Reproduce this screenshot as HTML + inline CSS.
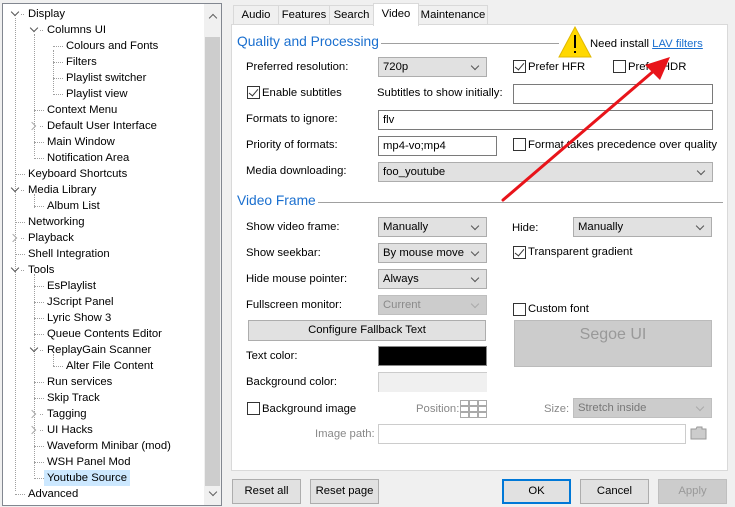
<!DOCTYPE html>
<html><head><meta charset="utf-8"><style>
*{box-sizing:border-box;margin:0;padding:0}
body{width:735px;height:507px;background:#f0f0f0;font-family:"Liberation Sans",sans-serif;font-size:11.3px;color:#000;position:relative;overflow:hidden}
.a{position:absolute;white-space:nowrap}
.tree{position:absolute;left:2px;top:3px;width:220px;height:503px;background:#fff;border:1px solid #828790}
.ti{position:absolute;height:16px;line-height:16px;font-size:11.3px}
.sel{background:#cce8ff;padding:0 3px;margin-left:-3px}
.cb{position:absolute;width:13px;height:13px;border:1px solid #333;background:#fff}
.cb.on::after{content:"";position:absolute;left:3px;top:0px;width:4px;height:8px;border:solid #333;border-width:0 1.5px 1.5px 0;transform:rotate(40deg)}
.combo{position:absolute;height:20px;background:#e1e1e1;border:1px solid #adadad;line-height:18px;padding-left:4px}
.combo::after{content:"";position:absolute;right:8px;top:5px;width:5px;height:5px;border:solid #555;border-width:0 1px 1px 0;transform:rotate(45deg)}
.combo.dis{background:#ccc;border-color:#bfbfbf;color:#8a8a8a}
.combo.dis::after{border-color:#aaa}
.tb{position:absolute;height:20px;background:#fff;border:1px solid #7a7a7a;line-height:18px;padding-left:4px}
.btn{position:absolute;height:25px;background:#e1e1e1;border:1px solid #adadad;text-align:center;line-height:23px}
.lbl{position:absolute;line-height:16px;white-space:nowrap}
.h{position:absolute;color:#1a6fcf;font-size:13.8px;white-space:nowrap}
.line{position:absolute;height:1px;background:#a0a0a0}
.dot{position:absolute;border-left:1px dotted #a0a0a0}
.doth{position:absolute;border-top:1px dotted #a0a0a0;height:0}
.chev{position:absolute;width:6px;height:6px;border:solid #555;border-width:0 1.5px 1.5px 0}
</style></head><body>

<div class="tree">
 <div class="a" style="left:201px;top:0;width:17px;height:501px;background:#f0f0f0"></div>
 <div class="a" style="left:202px;top:33px;width:15px;height:449px;background:#cdcdcd"></div>
 <div class="chev" style="left:207px;top:11px;transform:rotate(-135deg);border-color:#606060"></div>
 <div class="chev" style="left:207px;top:485px;transform:rotate(45deg);border-color:#606060"></div>
</div>
<div class="dot" style="left:15px;top:18px;height:473px"></div>
<div class="dot" style="left:34px;top:34px;height:122px"></div>
<div class="dot" style="left:53px;top:50px;height:42px"></div>
<div class="dot" style="left:34px;top:194px;height:14px"></div>
<div class="dot" style="left:34px;top:274px;height:202px"></div>
<div class="dot" style="left:53px;top:354px;height:12px"></div>
<div id="tr"></div>
<script>
var items=[["Display",0,"e"],["Columns UI",1,"e"],["Colours and Fonts",2],["Filters",2],["Playlist switcher",2],["Playlist view",2],["Context Menu",1],["Default User Interface",1,"c"],["Main Window",1],["Notification Area",1],["Keyboard Shortcuts",0],["Media Library",0,"e"],["Album List",1],["Networking",0],["Playback",0,"c"],["Shell Integration",0],["Tools",0,"e"],["EsPlaylist",1],["JScript Panel",1],["Lyric Show 3",1],["Queue Contents Editor",1],["ReplayGain Scanner",1,"e"],["Alter File Content",2],["Run services",1],["Skip Track",1],["Tagging",1,"c"],["UI Hacks",1,"c"],["Waveform Minibar (mod)",1],["WSH Panel Mod",1],["Youtube Source",1,"s"],["Advanced",0]];
var h="";
items.forEach(function(it,i){var y=6+i*16;var x=28+it[1]*19;var cx=x-13;
if(it[2]=="e"){h+='<div class="chev" style="left:'+(cx-3)+'px;top:'+(y+3)+'px;transform:rotate(45deg)"></div><div class="doth" style="left:'+(cx+6)+'px;top:'+(y+8)+'px;width:3px"></div>';}
else if(it[2]=="c"){h+='<div class="chev" style="left:'+(cx-5)+'px;top:'+(y+5)+'px;transform:rotate(-45deg);border-color:#aaa"></div><div class="doth" style="left:'+(cx+6)+'px;top:'+(y+8)+'px;width:3px"></div>';}
else{h+='<div class="doth" style="left:'+(cx)+'px;top:'+(y+8)+'px;width:10px"></div>';}
h+='<div class="ti'+(it[2]=="s"?" sel":"")+'" style="left:'+x+'px;top:'+y+'px">'+it[0]+'</div>';});
document.getElementById("tr").innerHTML=h;
</script>

<div class="a" style="left:231px;top:24px;width:497px;height:447px;background:#fff;border:1px solid #d9d9d9"></div>
<div class="a" style="left:233px;top:5px;width:46px;height:20px;background:#f0f0f0;border:1px solid #d9d9d9;text-align:center;line-height:18px">Audio</div>
<div class="a" style="left:278px;top:5px;width:52px;height:20px;background:#f0f0f0;border:1px solid #d9d9d9;text-align:center;line-height:18px">Features</div>
<div class="a" style="left:329px;top:5px;width:45px;height:20px;background:#f0f0f0;border:1px solid #d9d9d9;text-align:center;line-height:18px">Search</div>
<div class="a" style="left:373px;top:3px;width:46px;height:23px;background:#fff;border:1px solid #d9d9d9;border-bottom:none;text-align:center;line-height:20px">Video</div>
<div class="a" style="left:418px;top:5px;width:70px;height:20px;background:#f0f0f0;border:1px solid #d9d9d9;text-align:center;line-height:18px">Maintenance</div>

<div class="h" style="left:237px;top:34px">Quality and Processing</div>
<div class="line" style="left:381px;top:43px;width:178px"></div>
<svg class="a" style="left:558px;top:26px" width="34" height="32"><polygon points="17,1 33,31 1,31" fill="#ffd800" stroke="#e0b800"/><rect x="16" y="9" width="2" height="13" fill="#000"/><rect x="16" y="25" width="2" height="2" fill="#000"/></svg>
<div class="lbl" style="left:590px;top:36px">Need install <span style="color:#1a6fcf;text-decoration:underline">LAV filters</span></div>

<div class="lbl" style="left:246px;top:59px">Preferred resolution:</div>
<div class="combo" style="left:378px;top:57px;width:109px">720p</div>
<div class="cb on" style="left:513px;top:60px"></div><div class="lbl" style="left:528px;top:59px">Prefer HFR</div>
<div class="cb" style="left:613px;top:60px"></div><div class="lbl" style="left:628px;top:59px">Prefer HDR</div>

<div class="cb on" style="left:247px;top:86px"></div><div class="lbl" style="left:262px;top:85px">Enable subtitles</div>
<div class="lbl" style="left:377px;top:85px">Subtitles to show initially:</div>
<div class="tb" style="left:513px;top:84px;width:200px"></div>

<div class="lbl" style="left:246px;top:111px">Formats to ignore:</div>
<div class="tb" style="left:378px;top:110px;width:335px">flv</div>

<div class="lbl" style="left:246px;top:137px">Priority of formats:</div>
<div class="tb" style="left:378px;top:136px;width:119px">mp4-vo;mp4</div>
<div class="cb" style="left:513px;top:138px"></div><div class="lbl" style="left:528px;top:137px">Format takes precedence over quality</div>

<div class="lbl" style="left:246px;top:163px">Media downloading:</div>
<div class="combo" style="left:378px;top:162px;width:335px">foo_youtube</div>

<div class="h" style="left:237px;top:193px">Video Frame</div>
<div class="line" style="left:318px;top:202px;width:405px"></div>

<div class="lbl" style="left:246px;top:219px">Show video frame:</div>
<div class="combo" style="left:378px;top:217px;width:109px">Manually</div>
<div class="lbl" style="left:512px;top:220px">Hide:</div>
<div class="combo" style="left:573px;top:217px;width:139px">Manually</div>

<div class="lbl" style="left:246px;top:245px">Show seekbar:</div>
<div class="combo" style="left:378px;top:243px;width:109px">By mouse move</div>
<div class="cb on" style="left:513px;top:246px"></div><div class="lbl" style="left:528px;top:244px">Transparent gradient</div>

<div class="lbl" style="left:246px;top:271px">Hide mouse pointer:</div>
<div class="combo" style="left:378px;top:269px;width:109px">Always</div>

<div class="lbl" style="left:246px;top:297px">Fullscreen monitor:</div>
<div class="combo dis" style="left:378px;top:295px;width:109px">Current</div>

<div class="cb" style="left:513px;top:303px"></div><div class="lbl" style="left:528px;top:301px">Custom font</div>
<div class="a" style="left:514px;top:320px;width:198px;height:47px;background:#ccc;border:1px solid #bbb;color:#999;font-size:16px;text-align:center;padding-top:5px">Segoe UI</div>

<div class="btn" style="left:248px;top:320px;width:238px;height:21px;line-height:19px">Configure Fallback Text</div>

<div class="lbl" style="left:246px;top:348px">Text color:</div>
<div class="a" style="left:378px;top:346px;width:109px;height:20px;background:#000;border:1px solid #888"></div>
<div class="lbl" style="left:246px;top:374px">Background color:</div>
<div class="a" style="left:378px;top:372px;width:109px;height:20px;background:#f0f0f0;border:1px solid #ccc;border-bottom:none;border-right:none"></div>

<div class="cb" style="left:247px;top:402px"></div><div class="lbl" style="left:262px;top:401px">Background image</div>
<div class="lbl" style="left:416px;top:401px;color:#888">Position:</div>
<svg class="a" style="left:460px;top:400px" width="27" height="18"><g fill="none" stroke="#aaa"><rect x="0.5" y="0.5" width="8" height="5"/><rect x="9.5" y="0.5" width="8" height="5"/><rect x="18.5" y="0.5" width="8" height="5"/><rect x="0.5" y="6.5" width="8" height="5"/><rect x="9.5" y="6.5" width="8" height="5"/><rect x="18.5" y="6.5" width="8" height="5"/><rect x="0.5" y="12.5" width="8" height="5"/><rect x="9.5" y="12.5" width="8" height="5"/><rect x="18.5" y="12.5" width="8" height="5"/></g></svg>
<div class="lbl" style="left:544px;top:401px;color:#888">Size:</div>
<div class="combo dis" style="left:573px;top:398px;width:139px;color:#777">Stretch inside</div>

<div class="lbl" style="left:315px;top:426px;color:#888">Image path:</div>
<div class="tb" style="left:378px;top:424px;width:308px;border-color:#ccc"></div>
<svg class="a" style="left:690px;top:426px" width="17" height="14"><path d="M1 3h5l1-2h5v2h4v10H1z" fill="#ccc" stroke="#999"/></svg>

<div class="btn" style="left:232px;top:479px;width:69px">Reset all</div>
<div class="btn" style="left:310px;top:479px;width:69px">Reset page</div>
<div class="btn" style="left:502px;top:479px;width:69px;border:2px solid #0078d7;line-height:21px">OK</div>
<div class="btn" style="left:580px;top:479px;width:69px">Cancel</div>
<div class="btn" style="left:658px;top:479px;width:69px;background:#ccc;border-color:#bfbfbf;color:#999">Apply</div>

<svg class="a" style="left:0;top:0" width="735" height="507"><line x1="503" y1="200" x2="656" y2="69" stroke="#e8141a" stroke-width="3" stroke-linecap="round"/><polygon points="670,57 645,65 660,80" fill="#e8141a"/></svg>
</body></html>
